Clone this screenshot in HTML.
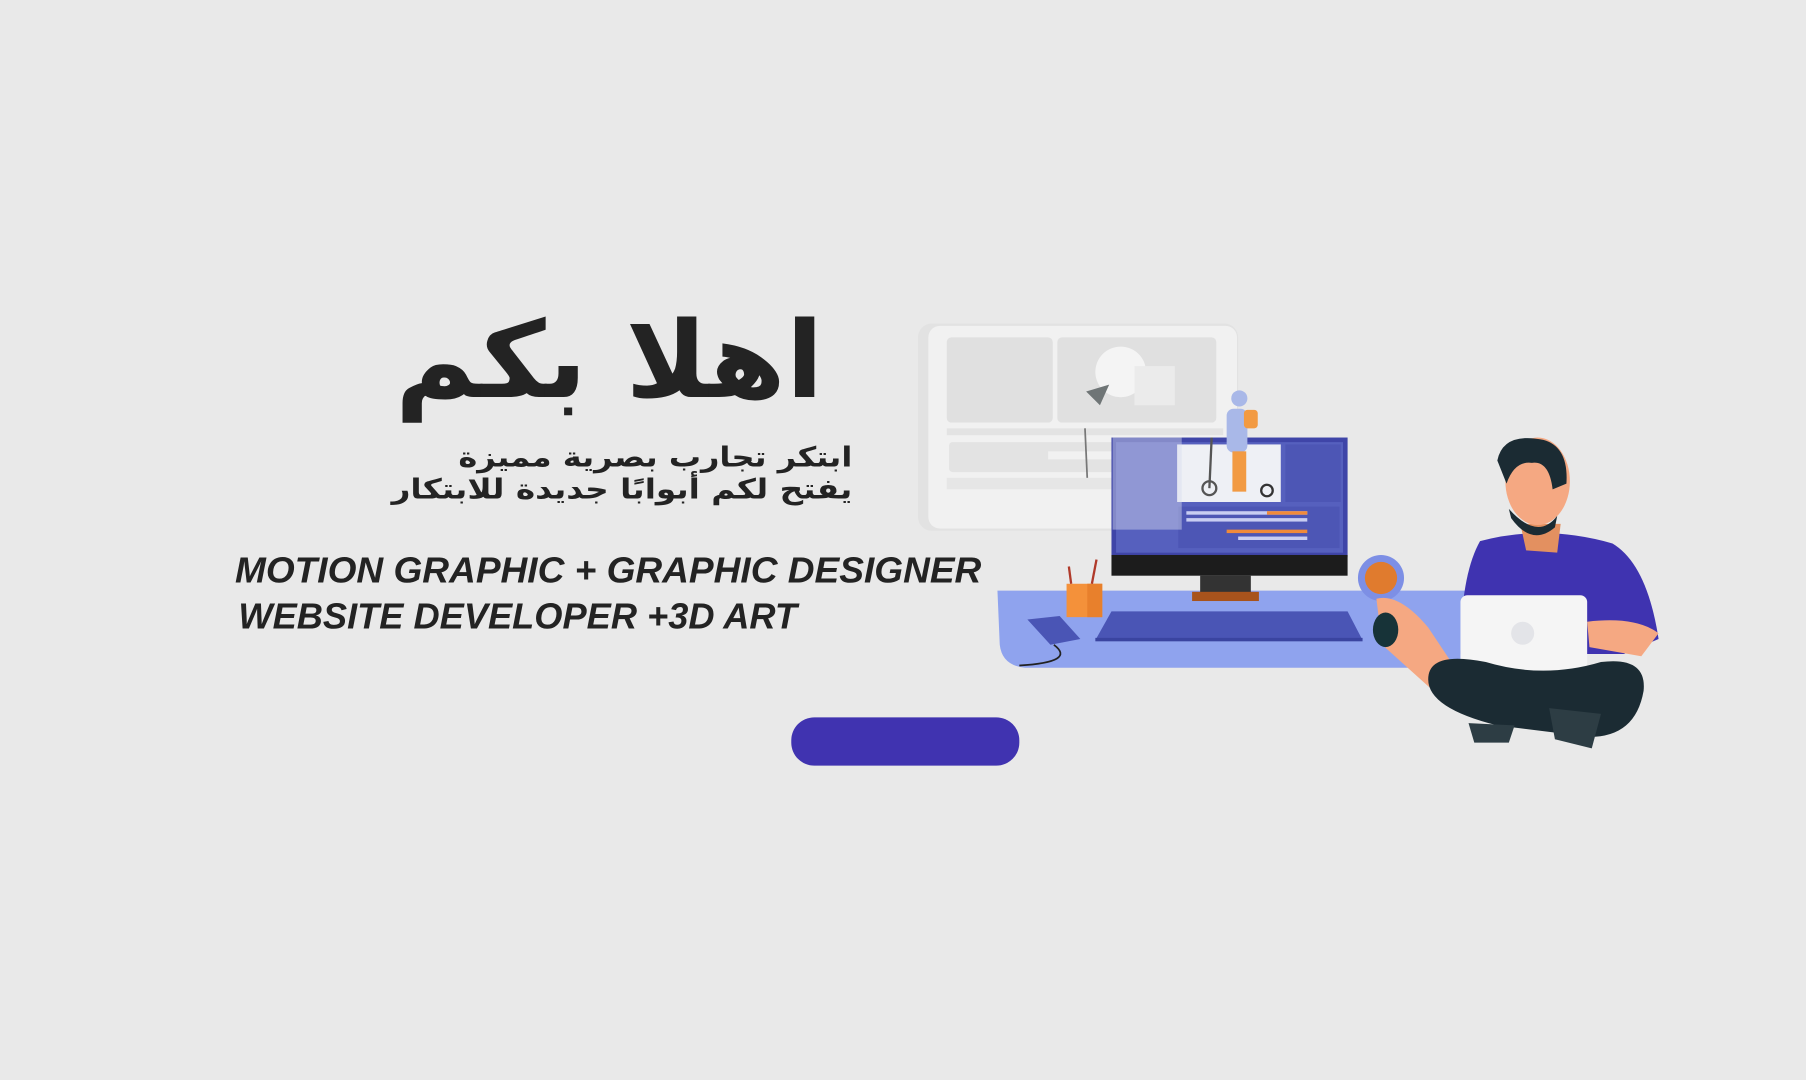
<!DOCTYPE html>
<html><head><meta charset="utf-8">
<style>
html,body{margin:0;padding:0;background:#e9e9e9;width:1806px;height:1080px;overflow:hidden}
svg{display:block}
</style></head>
<body>
<svg width="1806" height="1080" viewBox="0 0 1568 938" preserveAspectRatio="none" xmlns="http://www.w3.org/2000/svg">
<rect width="1568" height="938" fill="#e9e9e9"/>
<!-- Arabic title -->
<text x="715" y="345" text-anchor="end" font-family="DejaVu Sans, sans-serif" font-weight="bold" font-size="92" fill="#232323" textLength="372" lengthAdjust="spacingAndGlyphs">اهلا بكم</text>
<text x="740" y="405" text-anchor="end" font-family="DejaVu Sans, sans-serif" font-weight="bold" font-size="24" fill="#232323" textLength="342" lengthAdjust="spacingAndGlyphs">ابتكر تجارب بصرية مميزة</text>
<text x="740" y="433" text-anchor="end" font-family="DejaVu Sans, sans-serif" font-weight="bold" font-size="24" fill="#232323" textLength="400" lengthAdjust="spacingAndGlyphs">يفتح لكم أبوابًا جديدة للابتكار</text>
<!-- English -->
<text x="204" y="506" font-family="Liberation Sans, sans-serif" font-weight="bold" font-style="italic" font-size="31" fill="#232323" textLength="648" lengthAdjust="spacingAndGlyphs">MOTION GRAPHIC + GRAPHIC DESIGNER</text>
<text x="207" y="546" font-family="Liberation Sans, sans-serif" font-weight="bold" font-style="italic" font-size="31" fill="#232323" textLength="485" lengthAdjust="spacingAndGlyphs">WEBSITE DEVELOPER +3D ART</text>
<!-- button -->
<rect x="687" y="623" width="198" height="42" rx="20" fill="#4033b0"/>

<!-- background panel -->
<rect x="797" y="281" width="278" height="180" rx="12" fill="#e2e2e2"/>
<rect x="806" y="283" width="268" height="176" rx="10" fill="#f1f1f1"/>
<rect x="822" y="293" width="92" height="74" rx="4" fill="#e0e0e0"/>
<rect x="918" y="293" width="138" height="74" rx="4" fill="#e0e0e0"/>
<ellipse cx="973" cy="323" rx="22" ry="22" fill="#f4f4f4"/>
<rect x="985" y="318" width="35" height="34" fill="#ebebeb"/>
<path d="M943 340 L963 334 L955 352 Z" fill="#6f7576"/>
<rect x="822" y="372" width="240" height="6" fill="#e3e3e3"/>
<rect x="824" y="384" width="240" height="26" rx="3" fill="#e3e3e3"/>
<rect x="910" y="392" width="140" height="7" fill="#f1f1f1"/>
<line x1="942" y1="372" x2="944" y2="416" stroke="#777" stroke-width="1.5"/>
<rect x="822" y="415" width="246" height="10" fill="#e6e6e6"/>
<!-- desk -->
<path d="M866 513 L1275 513 L1275 580 L890 580 Q870 578 868 560 Z" fill="#8fa3ee"/>
<!-- monitor -->
<rect x="965" y="380" width="205" height="104" fill="#3f45a8"/>
<rect x="969" y="384" width="197" height="96" fill="#5660be"/>
<rect x="1022" y="386" width="90" height="50" fill="#eef0f5"/>
<rect x="1116" y="386" width="48" height="50" fill="#4d56b5"/>
<rect x="1023" y="440" width="140" height="36" fill="#4d56b5"/>
<rect x="1030" y="444" width="105" height="3" fill="#c8cdf2"/>
<rect x="1100" y="444" width="35" height="3" fill="#f08a3a"/>
<rect x="1030" y="450" width="105" height="3" fill="#c8cdf2"/>
<rect x="1065" y="460" width="70" height="3" fill="#f08a3a"/>
<rect x="1075" y="466" width="60" height="3" fill="#c8cdf2"/>
<rect x="966" y="380" width="60" height="80" fill="#d8dbef" opacity="0.45"/>
<rect x="965" y="482" width="205" height="18" fill="#1c1c1c"/>
<rect x="1042" y="500" width="44" height="15" fill="#333"/>
<rect x="1035" y="514" width="58" height="8" fill="#a8531c"/>
<!-- scooter person -->
<rect x="1065" y="355" width="18" height="38" rx="6" fill="#a9b8e8"/>
<circle cx="1076" cy="346" r="7" fill="#a9b8e8"/>
<rect x="1080" y="356" width="12" height="16" rx="3" fill="#f29a42"/>
<rect x="1070" y="392" width="12" height="35" fill="#f29a42"/>
<circle cx="1050" cy="424" r="6" fill="none" stroke="#555" stroke-width="2"/>
<circle cx="1100" cy="426" r="5" fill="none" stroke="#333" stroke-width="2"/>
<line x1="1052" y1="380" x2="1050" y2="424" stroke="#555" stroke-width="2"/>
<!-- keyboard -->
<path d="M965 531 L1170 531 L1183 556 L951 556 Z" fill="#4a55b5"/>
<rect x="951" y="554" width="232" height="3" fill="#3a44a0"/>
<!-- phone -->
<path d="M892 538 L920 535 L938 555 L912 560 Z" fill="#4a55b5"/>
<path d="M915 560 Q935 575 885 578" fill="none" stroke="#222" stroke-width="1.5"/>
<!-- pencil cup -->
<rect x="926" y="507" width="31" height="29" fill="#f4913a"/>
<rect x="944" y="507" width="13" height="29" fill="#e8802c"/>
<line x1="930" y1="507" x2="928" y2="492" stroke="#b03a2a" stroke-width="2"/>
<line x1="948" y1="507" x2="952" y2="486" stroke="#b03a2a" stroke-width="2"/>
<!-- mouse pad -->
<circle cx="1199" cy="502" r="20" fill="#7d8fe5"/>
<circle cx="1199" cy="502" r="14" fill="#e07b2e"/>
<!-- person -->
<path d="M1285 470 Q1340 455 1400 472 Q1430 490 1440 555 L1410 568 L1268 568 Q1268 500 1285 470 Z" fill="#3f33b0"/>
<path d="M1320 455 L1355 455 L1352 480 L1325 478 Z" fill="#e39060"/>
<ellipse cx="1335" cy="418" rx="28" ry="38" fill="#f5a882"/>
<path d="M1300 400 Q1305 375 1340 382 Q1362 388 1360 420 L1348 425 Q1345 400 1330 402 Q1315 400 1308 420 Z" fill="#1b2b33"/>
<path d="M1310 442 Q1335 470 1352 448 L1350 458 Q1330 475 1312 450 Z" fill="#1b2b33"/>
<path d="M1378 540 Q1420 535 1440 550 L1425 570 L1380 562 Z" fill="#f5a882"/>
<path d="M1195 520 Q1215 515 1240 545 L1270 590 L1250 605 L1200 560 Z" fill="#f5a882"/>
<ellipse cx="1203" cy="547" rx="11" ry="15" fill="#173338"/>
<rect x="1268" y="517" width="110" height="70" rx="6" fill="#f5f5f5"/>
<circle cx="1322" cy="550" r="10" fill="#e3e4e8"/>
<path d="M1240 590 Q1240 565 1290 575 Q1340 590 1390 575 Q1430 570 1427 600 Q1420 640 1380 640 L1300 630 Q1240 615 1240 590 Z" fill="#1b2b33"/>
<path d="M1275 628 L1315 630 L1310 645 L1280 645 Z" fill="#2d3d44"/>
<path d="M1345 615 L1390 620 L1382 650 L1350 642 Z" fill="#2d3d44"/>
</svg>
</body></html>
